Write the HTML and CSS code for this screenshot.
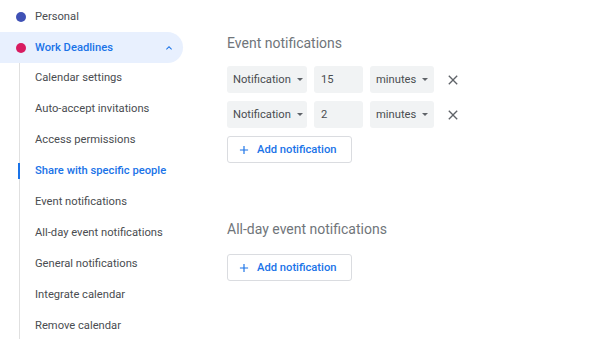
FILE: index.html
```html
<!DOCTYPE html>
<html lang="en">
<head>
  <meta charset="UTF-8" />
  <title>Calendar settings</title>
  <link rel="stylesheet" href="styles.css">
</head>
<body>
  <div class="page">
    <nav class="sidebar">
      <div class="cal-row">
        <span class="dot dot-blue"></span>
        <span>Personal</span>
      </div>
      <div class="cal-row open">
        <span class="dot dot-pink"></span>
        <span class="cal-name">Work Deadlines</span>
        <svg class="chevron" width="12" height="12" viewBox="0 0 24 24"><path d="M7.4 15.4 12 10.8l4.6 4.6L18 14l-6-6-6 6z" fill="#1a73e8"/></svg>
      </div>
      <ul class="sub-list">
        <li>Calendar settings</li>
        <li>Auto-accept invitations</li>
        <li>Access permissions</li>
        <li class="active">Share with specific people</li>
        <li>Event notifications</li>
        <li>All-day event notifications</li>
        <li>General notifications</li>
        <li>Integrate calendar</li>
        <li>Remove calendar</li>
      </ul>
    </nav>

    <main class="content">
      <section class="block">
        <h2>Event notifications</h2>
        <div class="notif-row">
          <div class="field type">Notification <span class="caret"></span></div>
          <div class="field num">15</div>
          <div class="field unit">minutes <span class="caret"></span></div>
          <svg class="close" width="16" height="16" viewBox="0 0 24 24"><path d="M19 6.4 17.6 5 12 10.6 6.4 5 5 6.4 10.6 12 5 17.6 6.4 19 12 13.4 17.6 19 19 17.6 13.4 12z" fill="#5f6368"/></svg>
        </div>
        <div class="notif-row">
          <div class="field type">Notification <span class="caret"></span></div>
          <div class="field num">2</div>
          <div class="field unit">minutes <span class="caret"></span></div>
          <svg class="close" width="16" height="16" viewBox="0 0 24 24"><path d="M19 6.4 17.6 5 12 10.6 6.4 5 5 6.4 10.6 12 5 17.6 6.4 19 12 13.4 17.6 19 19 17.6 13.4 12z" fill="#5f6368"/></svg>
        </div>
        <button class="add-btn">
          <svg width="14" height="14" viewBox="0 0 24 24"><path d="M19 13h-6v6h-2v-6H5v-2h6V5h2v6h6z" fill="#1a73e8"/></svg>
          Add notification
        </button>
      </section>

      <section class="block allday">
        <h2>All-day event notifications</h2>
        <button class="add-btn">
          <svg width="14" height="14" viewBox="0 0 24 24"><path d="M19 13h-6v6h-2v-6H5v-2h6V5h2v6h6z" fill="#1a73e8"/></svg>
          Add notification
        </button>
      </section>
    </main>
  </div>
</body>
</html>
```

FILE: styles.css
```css
body {
  margin: 0;
  background: #ffffff;
  color: #4a4d51;
  font-family: Roboto, "Liberation Sans", sans-serif;
  font-size: 11.2px;
}
.page {
  display: flex;
}
.sidebar {
  width: 227px;
  flex-shrink: 0;
  padding-top: 1px;
}
.cal-row {
  display: flex;
  align-items: center;
  height: 31px;
  width: 183px;
  box-sizing: border-box;
  padding-left: 16px;
  border-radius: 0 16px 16px 0;
}
.cal-row.open {
  background: #e8f0fe;
  color: #1a73e8;
  font-weight: 500;
}
.cal-name {
  flex: 1;
}
.chevron {
  margin-right: 8px;
}
.dot {
  width: 10px;
  height: 10px;
  border-radius: 50%;
  margin-right: 9px;
}
.dot-blue {
  background: #3f51b5;
}
.dot-pink {
  background: #d81b60;
}
.sub-list {
  list-style: none;
  margin: 0 0 0 19px;
  padding: 0 0 4px 0;
  border-left: 1px solid #e0e0e0;
}
.sub-list li {
  position: relative;
  height: 31px;
  line-height: 29px;
  padding-left: 15px;
}
.sub-list li.active {
  color: #1a73e8;
  font-weight: 500;
}
.sub-list li.active::before {
  content: "";
  position: absolute;
  left: -2px;
  top: 7px;
  width: 2px;
  height: 16px;
  background: #1a73e8;
}
.content {
  flex: 1;
}
.block h2 {
  margin: 0;
  font-size: 14px;
  font-weight: 400;
  color: #70757a;
  line-height: 20px;
}
.block:first-child h2 {
  margin-top: 33px;
  margin-bottom: 13px;
}
.notif-row {
  display: flex;
  align-items: center;
  gap: 7px;
  margin-bottom: 8px;
}
.field {
  display: flex;
  align-items: center;
  height: 27px;
  box-sizing: border-box;
  padding-left: 6px;
  background: #f1f3f4;
  border-radius: 3px;
}
.type {
  width: 80px;
}
.num {
  width: 49px;
  padding-left: 7px;
}
.unit {
  width: 64px;
}
.caret {
  width: 0;
  height: 0;
  margin-left: 6px;
  border-left: 3px solid transparent;
  border-right: 3px solid transparent;
  border-top: 3px solid #5f6368;
}
.close {
  margin-left: 4px;
}
.add-btn {
  display: flex;
  align-items: center;
  gap: 6px;
  height: 27px;
  width: 125px;
  padding: 0 0 0 9px;
  background: #ffffff;
  border: 1px solid #dadce0;
  border-radius: 3px;
  color: #1a73e8;
  font-family: Roboto, "Liberation Sans", sans-serif;
  font-size: 11.2px;
  font-weight: 500;
}
.allday h2 {
  margin-top: 56px;
  margin-bottom: 15px;
}
```
